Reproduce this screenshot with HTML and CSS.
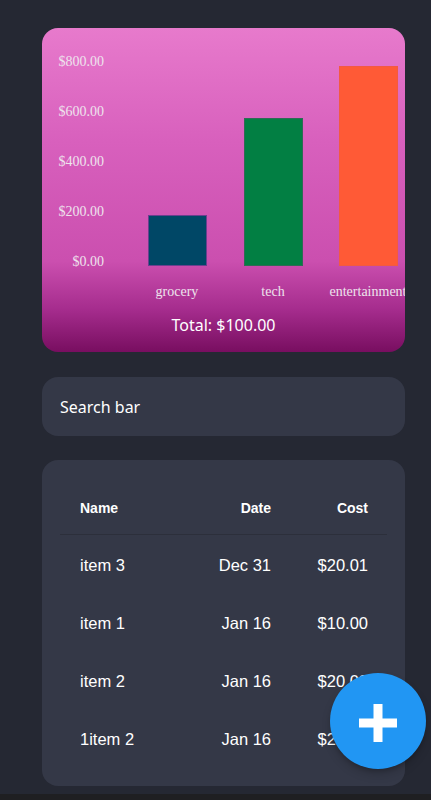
FILE: index.html
```html
<!DOCTYPE html>
<html lang="en">
<head>
<meta charset="utf-8">
<title>Expenses</title>
<link rel="stylesheet" href="styles.css">
</head>
<body>
<main class="page">
  <section class="chart-card">
    <svg class="chart" width="363" height="286" viewBox="0 0 363 286">
      <g class="y-labels">
        <text x="62" y="38">$800.00</text>
        <text x="62" y="88">$600.00</text>
        <text x="62" y="138">$400.00</text>
        <text x="62" y="188">$200.00</text>
        <text x="62" y="238">$0.00</text>
      </g>
      <rect class="bar bar-grocery" x="106.5" y="187.5" width="58" height="50"></rect>
      <rect class="bar bar-tech" x="202.5" y="90.5" width="58" height="147"></rect>
      <rect class="bar bar-ent" x="297.5" y="38.5" width="58" height="199"></rect>
      <g class="x-labels">
        <text x="135" y="268">grocery</text>
        <text x="231" y="268">tech</text>
        <text x="326" y="268">entertainment</text>
      </g>
    </svg>
    <p class="total">Total: $100.00</p>
  </section>

  <div class="search">Search bar</div>

  <section class="table-card">
    <div class="table">
      <div class="row head">
        <span class="c-name">Name</span>
        <span class="c-date">Date</span>
        <span class="c-cost">Cost</span>
      </div>
      <div class="row">
        <span class="c-name">item 3</span>
        <span class="c-date">Dec 31</span>
        <span class="c-cost">$20.01</span>
      </div>
      <div class="row">
        <span class="c-name">item 1</span>
        <span class="c-date">Jan 16</span>
        <span class="c-cost">$10.00</span>
      </div>
      <div class="row">
        <span class="c-name">item 2</span>
        <span class="c-date">Jan 16</span>
        <span class="c-cost">$20.00</span>
      </div>
      <div class="row">
        <span class="c-name">1item 2</span>
        <span class="c-date">Jan 16</span>
        <span class="c-cost">$20.00</span>
      </div>
    </div>
  </section>

  <div class="bottom-strip"></div>
</main>

<button class="fab" type="button" aria-label="Add">
  <svg width="38" height="38" viewBox="0 0 38 38">
    <rect x="14.5" y="0" width="9" height="38" fill="#ffffff"></rect>
    <rect x="0" y="14.5" width="38" height="9" fill="#ffffff"></rect>
  </svg>
</button>
</body>
</html>
```

FILE: styles.css
```css
* {
  box-sizing: border-box;
}

html, body {
  margin: 0;
  padding: 0;
}

body {
  background: #252833;
  font-family: "Liberation Sans", Arial, sans-serif;
  color: #ffffff;
  overflow: hidden;
  height: 800px;
}

.page {
  display: flex;
  flex-direction: column;
  padding: 28px 26px 0 42px;
}

.chart-card {
  width: 363px;
  height: 324px;
  border-radius: 16px;
  overflow: hidden;
  background: linear-gradient(to bottom, #e77acc 0%, #d860bd 35%, #cb4faf 72%, #a52c8d 87%, #780e60 100%);
  display: flex;
  flex-direction: column;
}

.chart {
  display: block;
  flex: none;
}

.chart text {
  font-family: "Liberation Serif", "Times New Roman", serif;
  font-size: 14px;
  fill: #eee3ed;
}

.y-labels text {
  text-anchor: end;
}

.x-labels text {
  text-anchor: middle;
}

.bar {
  stroke-width: 1;
}

.bar-grocery {
  fill: #004766;
  stroke: #6a3f8e;
}

.bar-tech {
  fill: #027f43;
  stroke: #2f6a55;
}

.bar-ent {
  fill: #ff5a36;
  stroke: #f25a42;
}

.total {
  margin: 0;
  text-align: center;
  font-family: "Noto Sans", "Open Sans", sans-serif;
  font-size: 16px;
  line-height: 22px;
  color: #ffffff;
}

.search {
  margin-top: 25px;
  width: 363px;
  height: 59px;
  border-radius: 16px;
  background: #343847;
  padding: 0 18px;
  display: flex;
  align-items: center;
  font-family: "Noto Sans", "Open Sans", sans-serif;
  font-size: 16px;
  color: #ffffff;
}

.table-card {
  margin-top: 24px;
  width: 363px;
  height: 326px;
  border-radius: 16px;
  background: #343847;
  padding: 18px;
}

.table {
  display: flex;
  flex-direction: column;
}

.row {
  display: grid;
  grid-template-columns: 131px 100px 96px;
  align-items: center;
  height: 58px;
  padding-top: 3px;
  font-size: 16.5px;
}

.row.head {
  height: 57px;
  padding-top: 4px;
  font-size: 14px;
  font-weight: bold;
  border-bottom: 1px solid #2c2f3b;
}

.c-name {
  padding-left: 20px;
}

.c-date {
  text-align: right;
  padding-right: 20px;
}

.c-cost {
  text-align: right;
  padding-right: 19px;
  white-space: nowrap;
}

.bottom-strip {
  margin: 8px -26px 0 -42px;
  height: 20px;
  background: #1f1f22;
}

.fab {
  position: fixed;
  right: 5px;
  bottom: 31px;
  width: 96px;
  height: 96px;
  border-radius: 50%;
  border: none;
  padding: 0;
  background: #2196f3;
  display: flex;
  align-items: center;
  justify-content: center;
  box-shadow: 0 3px 5px -1px rgba(0, 0, 0, 0.2), 0 6px 10px 0 rgba(0, 0, 0, 0.14);
}

.fab svg {
  display: block;
  margin-top: 4px;
}
```
